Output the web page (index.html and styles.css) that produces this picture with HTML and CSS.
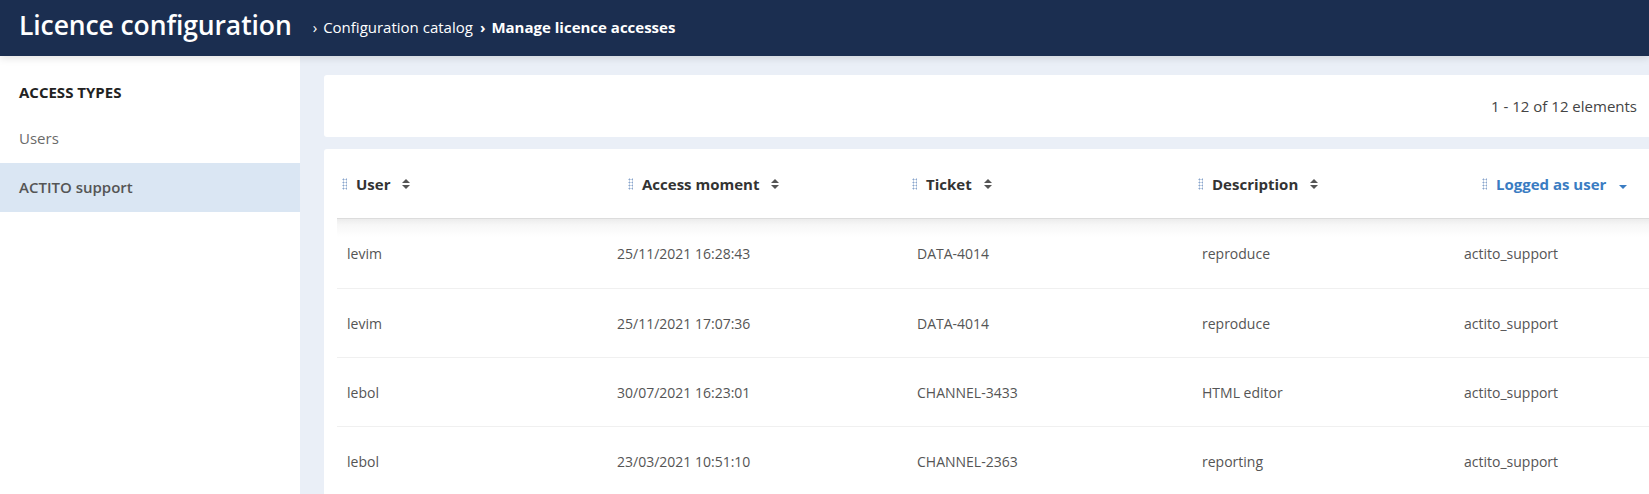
FILE: index.html
```html
<!DOCTYPE html>
<html lang="en">
  <head>
    <meta charset="UTF-8" />
    <title>Licence configuration</title>
    <link rel="stylesheet" href="styles.css">
  </head>
  <body>
    <!-- Top bar -->
    <header class="topbar">
      <h1 class="page-title">Licence configuration</h1>
      <nav class="breadcrumb">
        <span class="crumb">Configuration catalog</span>
        <span class="crumb current">Manage licence accesses</span>
      </nav>
    </header>

    <div class="layout">
      <!-- Side menu -->
      <aside class="sidebar">
        <h3 class="side-title">ACCESS TYPES</h3>
        <a class="side-item" href="#">Users</a>
        <a class="side-item active" href="#">ACTITO support</a>
      </aside>

      <main class="content">
        <div class="card toolbar">
          <span class="count">1 - 12 of 12 elements</span>
        </div>

        <div class="card grid-card">
          <div class="grid-head">
            <div class="th"><i class="grip"></i>User<i class="sort"></i></div>
            <div class="th"><i class="grip"></i>Access moment<i class="sort"></i></div>
            <div class="th"><i class="grip"></i>Ticket<i class="sort"></i></div>
            <div class="th"><i class="grip"></i>Description<i class="sort"></i></div>
            <div class="th sorted"><i class="grip"></i>Logged as user<i class="sort-down"></i></div>
          </div>

          <div class="grid-body">
            <div class="row">
              <div class="td">levim</div>
              <div class="td">25/11/2021 16:28:43</div>
              <div class="td">DATA-4014</div>
              <div class="td">reproduce</div>
              <div class="td">actito_support</div>
            </div>
            <div class="row">
              <div class="td">levim</div>
              <div class="td">25/11/2021 17:07:36</div>
              <div class="td">DATA-4014</div>
              <div class="td">reproduce</div>
              <div class="td">actito_support</div>
            </div>
            <div class="row">
              <div class="td">lebol</div>
              <div class="td">30/07/2021 16:23:01</div>
              <div class="td">CHANNEL-3433</div>
              <div class="td">HTML editor</div>
              <div class="td">actito_support</div>
            </div>
            <div class="row">
              <div class="td">lebol</div>
              <div class="td">23/03/2021 10:51:10</div>
              <div class="td">CHANNEL-2363</div>
              <div class="td">reporting</div>
              <div class="td">actito_support</div>
            </div>
          </div>
        </div>
      </main>
    </div>
  </body>
</html>
```

FILE: styles.css
```css
* {
  margin: 0;
  padding: 0;
  box-sizing: border-box;
}

html,
body {
  height: 100%;
  overflow: hidden;
}

body {
  font-family: "Open Sans", "Noto Sans", sans-serif;
  font-size: 15px;
  color: #333;
  background: #eaeff7;
  display: flex;
  flex-direction: column;
}

/* Top bar */
.topbar {
  height: 56px;
  flex: none;
  background: #1b2e50;
  color: #fff;
  display: flex;
  align-items: center;
  padding-left: 19px;
  position: relative;
  z-index: 2;
  box-shadow: 0 2px 8px rgba(0, 0, 0, 0.12);
}

.page-title {
  font-size: 26.5px;
  font-weight: 600;
  letter-spacing: -0.1px;
  margin-top: -6px;
}

.breadcrumb {
  display: flex;
  margin-left: 21px;
  font-size: 15px;
  margin-top: -3px;
}

.crumb::before {
  content: "\203A";
  margin: 0 6px 0 0;
}

.crumb + .crumb {
  margin-left: 7px;
}

.crumb.current {
  font-weight: 700;
}

/* Layout */
.layout {
  flex: 1;
  display: flex;
  min-height: 0;
}

.sidebar {
  width: 300px;
  flex: none;
  background: #fff;
  padding-top: 25px;
}

.side-title {
  font-size: 15px;
  font-weight: 700;
  color: #222;
  padding: 0 19px;
  height: 22px;
  line-height: 22px;
}

.side-item {
  display: block;
  text-decoration: none;
  color: #6a6a6a;
  padding: 0 19px;
  height: 49px;
  line-height: 49px;
  font-size: 15px;
}

.side-item:first-of-type {
  margin-top: 11px;
}

.side-item.active {
  background: #dae6f3;
  color: #555;
  font-weight: 600;
}

/* Content */
.content {
  flex: 1;
  padding: 19px 0 0 24px;
  display: flex;
  flex-direction: column;
  gap: 12px;
  min-width: 0;
}

.card {
  background: #fff;
  border-radius: 3px 0 0 3px;
}

.toolbar {
  height: 62px;
  flex: none;
  display: flex;
  align-items: center;
  justify-content: flex-end;
  padding-right: 12px;
}

.count {
  color: #444;
  font-size: 15px;
}

.grid-card {
  flex: 1;
}

.grid-head {
  display: grid;
  grid-template-columns: 286px 284px 286px 284px 1fr;
  height: 69px;
  align-items: center;
  padding-left: 18px;
}

.th {
  display: flex;
  align-items: center;
  font-weight: 700;
  color: #333;
}

.th.sorted {
  color: #3a7cc2;
}

.grip {
  width: 5px;
  height: 12px;
  margin-right: 9px;
  background-image: radial-gradient(circle, #8aa5cc 0.9px, transparent 1.1px);
  background-size: 3px 3px;
  background-position: 0 0;
}

.sort {
  width: 0;
  height: 10px;
  margin-left: 12px;
  position: relative;
}

.sort::before,
.sort::after {
  content: "";
  position: absolute;
  left: 0;
  border-left: 4px solid transparent;
  border-right: 4px solid transparent;
}

.sort::before {
  top: 0;
  border-bottom: 4px solid #555;
}

.sort::after {
  top: 6px;
  border-top: 4px solid #555;
}

.sort-down {
  margin-left: 13px;
  margin-top: 6px;
  border-left: 4px solid transparent;
  border-right: 4px solid transparent;
  border-top: 4px solid #3a7cc2;
}

.grid-body {
  margin-left: 13px;
  border-top: 1px solid #dcdcdc;
  background: linear-gradient(to bottom, #ececec 0, #f7f7f7 6px, #fff 18px);
}

.row {
  display: grid;
  grid-template-columns: 270px 300px 285px 262px 1fr;
  height: 69px;
  align-items: center;
  padding-left: 10px;
  border-bottom: 1px solid #f0f0f0;
  color: #555;
  font-size: 14px;
}

.row:first-child {
  height: 70px;
}
```
